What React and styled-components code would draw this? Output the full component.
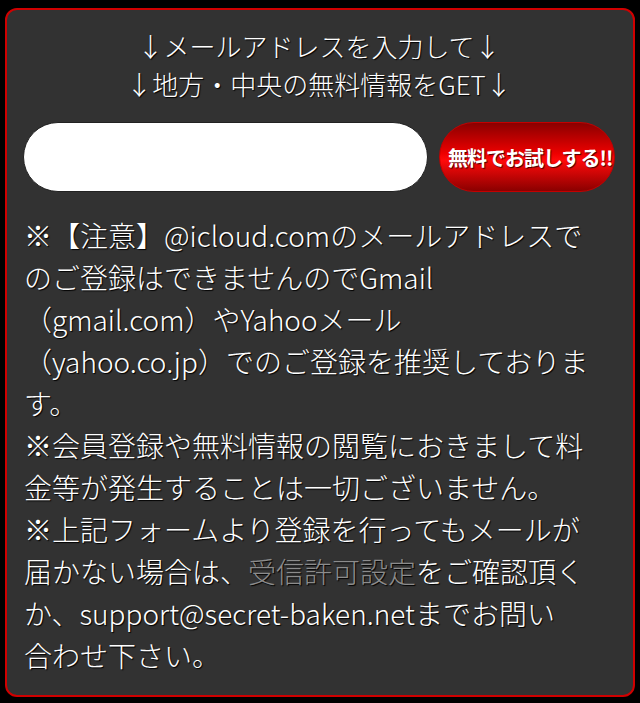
import React from 'react'
import styled, { createGlobalStyle } from 'styled-components'

const Global = createGlobalStyle`
  html, body {
    margin: 0;
    padding: 0;
    background: #000;
  }
  body {
    font-family: "Noto Sans CJK JP", "Noto Sans", sans-serif;
  }
`

const Box = styled.div`
  margin: 8px 5px;
  border: 2px solid #d00000;
  border-radius: 12px;
  background: #323232;
  padding: 17px 18px 19px 16px;
  min-height: 640px;
  box-sizing: border-box;
`

const Lead = styled.p`
  margin: 0;
  text-align: center;
  color: #fff;
  font-size: 26px;
  font-weight: 300;
  line-height: 38px;
  text-shadow: 1px 1px 1px #000;
`

const Form = styled.form`
  display: flex;
  gap: 11px;
  margin-top: 19px;
  height: 70px;
`

const Input = styled.input`
  flex: 1;
  min-width: 0;
  height: 70px;
  box-sizing: border-box;
  border: 1px solid #222;
  border-radius: 35px;
  background: #fff;
  font-size: 20px;
  padding: 0 24px;
  outline: none;
`

const Submit = styled.button`
  width: 176px;
  height: 70px;
  flex: none;
  box-sizing: border-box;
  border: 1px solid #c40000;
  border-radius: 35px;
  padding: 0 0 0 8px;
  background: linear-gradient(#8a0000 0%, #ee0000 45%, #ff0a0a 55%, #8a0000 100%);
  color: #fff;
  font-family: "Noto Sans CJK JP", sans-serif;
  font-weight: bold;
  font-size: 20px;
  letter-spacing: -1px;
  white-space: nowrap;
  text-align: left;
  text-shadow: 1px 1px 1px #400;
  overflow: hidden;
`

const Notes = styled.p`
  margin: 22px 0 0 1px;
  color: #fff;
  font-size: 28px;
  font-weight: 300;
  line-height: 42px;
  text-shadow: 1px 1px 1px #000;
`

const Link = styled.a`
  color: #8c8c8c;
  text-decoration: none;
`

export default function App() {
  return (
    <>
      <Global />
      <Box>
        <Lead>
          ↓メールアドレスを入力して↓<br />
          ↓地方・中央の無料情報をGET↓
        </Lead>
        <Form onSubmit={e => e.preventDefault()}>
          <Input type="email" />
          <Submit type="submit">無料でお試しする!!</Submit>
        </Form>
        <Notes>
          ※【注意】@icloud.comのメールアドレスで<br />
          のご登録はできませんのでGmail<br />
          （gmail.com）やYahooメール<br />
          （yahoo.co.jp）でのご登録を推奨しておりま<br />
          す。<br />
          ※会員登録や無料情報の閲覧におきまして料<br />
          金等が発生することは一切ございません。<br />
          ※上記フォームより登録を行ってもメールが<br />
          届かない場合は、<Link href="#">受信許可設定</Link>をご確認頂く<br />
          か、support@secret-baken.netまでお問い<br />
          合わせ下さい。
        </Notes>
      </Box>
    </>
  )
}
